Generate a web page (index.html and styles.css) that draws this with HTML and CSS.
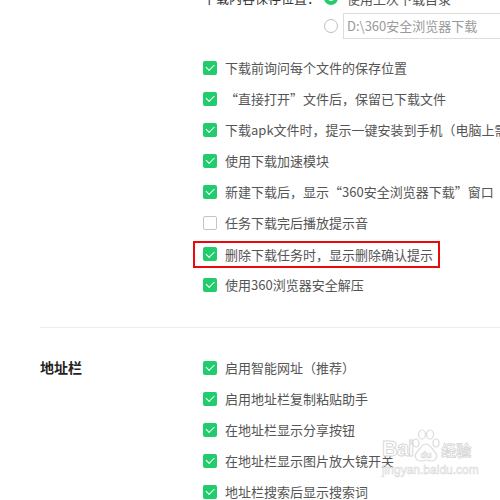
FILE: index.html
```html
<!DOCTYPE html>
<html lang="zh-CN">
<head>
<meta charset="utf-8">
<link rel="stylesheet" href="styles.css">
</head>
<body>
<div class="page">
  <section class="group group-download">
    <div class="group-label"></div>
    <div class="group-body">
      <div class="save-grid">
        <span class="save-label">下载内容保存位置：</span>
        <div class="save-opt"><span class="radio on"></span><span class="radio-text">使用上次下载目录</span></div>
        <span></span>
        <div class="save-opt"><span class="radio"></span><span class="path-input">D:\360安全浏览器下载</span></div>
      </div>
      <ul class="checklist">
        <li><span class="cb on"></span><span>下载前询问每个文件的保存位置</span></li>
        <li><span class="cb on"></span><span>“直接打开”文件后，保留已下载文件</span></li>
        <li><span class="cb on"></span><span>下载apk文件时，提示一键安装到手机（电脑上需要安装360手机助手）</span></li>
        <li><span class="cb on"></span><span>使用下载加速模块</span></li>
        <li><span class="cb on"></span><span>新建下载后，显示“360安全浏览器下载”窗口</span></li>
        <li><span class="cb"></span><span>任务下载完后播放提示音</span></li>
        <li><span class="opt hl"><span class="cb on"></span><span>删除下载任务时，显示删除确认提示</span></span></li>
        <li><span class="cb on"></span><span>使用360浏览器安全解压</span></li>
      </ul>
    </div>
  </section>
  <div class="divider"></div>
  <section class="group group-address">
    <div class="group-label">地址栏</div>
    <ul class="checklist">
      <li><span class="cb on"></span><span>启用智能网址（推荐）</span></li>
      <li><span class="cb on"></span><span>启用地址栏复制粘贴助手</span></li>
      <li><span class="cb on"></span><span>在地址栏显示分享按钮</span></li>
      <li><span class="cb on"></span><span>在地址栏显示图片放大镜开关</span></li>
      <li><span class="cb on"></span><span>地址栏搜索后显示搜索词</span></li>
    </ul>
  </section>
  <div class="watermark">
    <div class="wm-logo">
      <span class="wm-bai">Bai</span>
      <svg class="wm-paw" width="28" height="33" viewBox="0 0 28 33">
        <g fill="#fff" stroke="#dcdcdc" stroke-width="1.2">
          <ellipse cx="4" cy="14" rx="3" ry="4"/>
          <ellipse cx="10" cy="5.5" rx="3.5" ry="4.5"/>
          <ellipse cx="18" cy="5.5" rx="3.5" ry="4.5"/>
          <ellipse cx="24" cy="14" rx="3" ry="4"/>
          <path d="M14 15 C10 15 8 20 5 23 C2 26 3 32 9 32 C11 32 12 31 14 31 C16 31 17 32 19 32 C25 32 26 26 23 23 C20 20 18 15 14 15 Z"/>
        </g>
        <text x="14" y="29" text-anchor="middle" font-family="Liberation Sans, sans-serif" font-size="9" font-weight="bold" fill="#fff" stroke="#d6d6d6" stroke-width="0.6">du</text>
      </svg>
      <span class="wm-jy">经验</span>
    </div>
    <div class="wm-url">jingyan.baidu.com</div>
  </div>
</div>
</body>
</html>
```
FILE: styles.css
```css
html, body {
  margin: 0;
  padding: 0;
  background: #fff;
  overflow: hidden;
}
body {
  width: 500px;
  height: 500px;
  font-family: "Noto Sans CJK SC", "Microsoft YaHei", sans-serif;
  font-size: 13px;
  color: #555;
}
.page {
  position: relative;
  padding-left: 40px;
  width: 700px;
  white-space: nowrap;
}
.group {
  display: grid;
  grid-template-columns: 163px 1fr;
}
.group-download {
  margin-top: -15px;
  padding-bottom: 27px;
}
.group-address {
  padding-top: 24px;
}
.group-label {
  font-size: 14px;
  font-weight: bold;
  color: #222;
  line-height: 31px;
}
.save-grid {
  display: grid;
  grid-template-columns: 121px auto;
  row-gap: 2px;
}
.save-label {
  line-height: 26px;
  color: #333;
}
.save-opt {
  display: flex;
  align-items: center;
  height: 26px;
}
.radio {
  box-sizing: border-box;
  width: 14px;
  height: 14px;
  border-radius: 50%;
  border: 1px solid #bdbdbd;
  background: #fff;
  flex: none;
}
.radio.on {
  border: 4px solid #22cc6a;
}
.radio-text {
  margin-left: 9px;
  color: #555;
}
.path-input {
  box-sizing: border-box;
  margin-left: 5px;
  width: 220px;
  height: 26px;
  line-height: 24px;
  border: 1px solid #dcdcdc;
  padding-left: 3px;
  color: #999;
  background: #fff;
}
.checklist {
  list-style: none;
  margin: 13px 0 0;
  padding: 0;
}
.group-address .checklist {
  margin-top: 0;
}
.checklist li {
  display: flex;
  align-items: center;
  gap: 8px;
  height: 31px;
}
.opt {
  display: flex;
  align-items: center;
  gap: 8px;
}
.opt.hl {
  box-sizing: border-box;
  height: 27px;
  border: 2px solid #ea0a0a;
  margin-left: -10px;
  padding: 0 5px 0 8px;
  margin-top: 1px;
}
.cb {
  box-sizing: border-box;
  position: relative;
  width: 14px;
  height: 14px;
  border-radius: 2px;
  border: 1px solid #c4c4c4;
  background: #fff;
  flex: none;
}
.cb.on {
  border: none;
  background: #20cc6b;
}
.cb.on::after {
  content: "";
  position: absolute;
  left: 3px;
  top: 3.5px;
  width: 7px;
  height: 3.5px;
  border-left: 1.6px solid #fff;
  border-bottom: 1.6px solid #fff;
  transform: rotate(-45deg);
}
.divider {
  border-top: 1px solid #ededed;
  height: 0;
}
.watermark {
  position: absolute;
  left: 382px;
  top: 444px;
  color: #fff;
}
.wm-logo {
  display: flex;
  align-items: flex-end;
  height: 33px;
}
.wm-bai {
  font-family: "Liberation Sans", Arial, sans-serif;
  font-weight: bold;
  font-size: 22px;
  line-height: 26px;
  color: #fff;
  -webkit-text-stroke: 1px #d9d9d9;
  letter-spacing: -1px;
}
.wm-paw {
  margin-left: -1px;
}
.wm-jy {
  font-family: "Noto Sans CJK SC", sans-serif;
  font-size: 15px;
  line-height: 24px;
  font-weight: bold;
  color: #fff;
  -webkit-text-stroke: 0.8px #d6d6d6;
  margin-left: 1px;
}
.wm-url {
  font-family: "Liberation Sans", Arial, sans-serif;
  font-size: 12px;
  line-height: 14px;
  margin-top: 1px;
  color: #fff;
  -webkit-text-stroke: 0.6px #dadada;
}
```
